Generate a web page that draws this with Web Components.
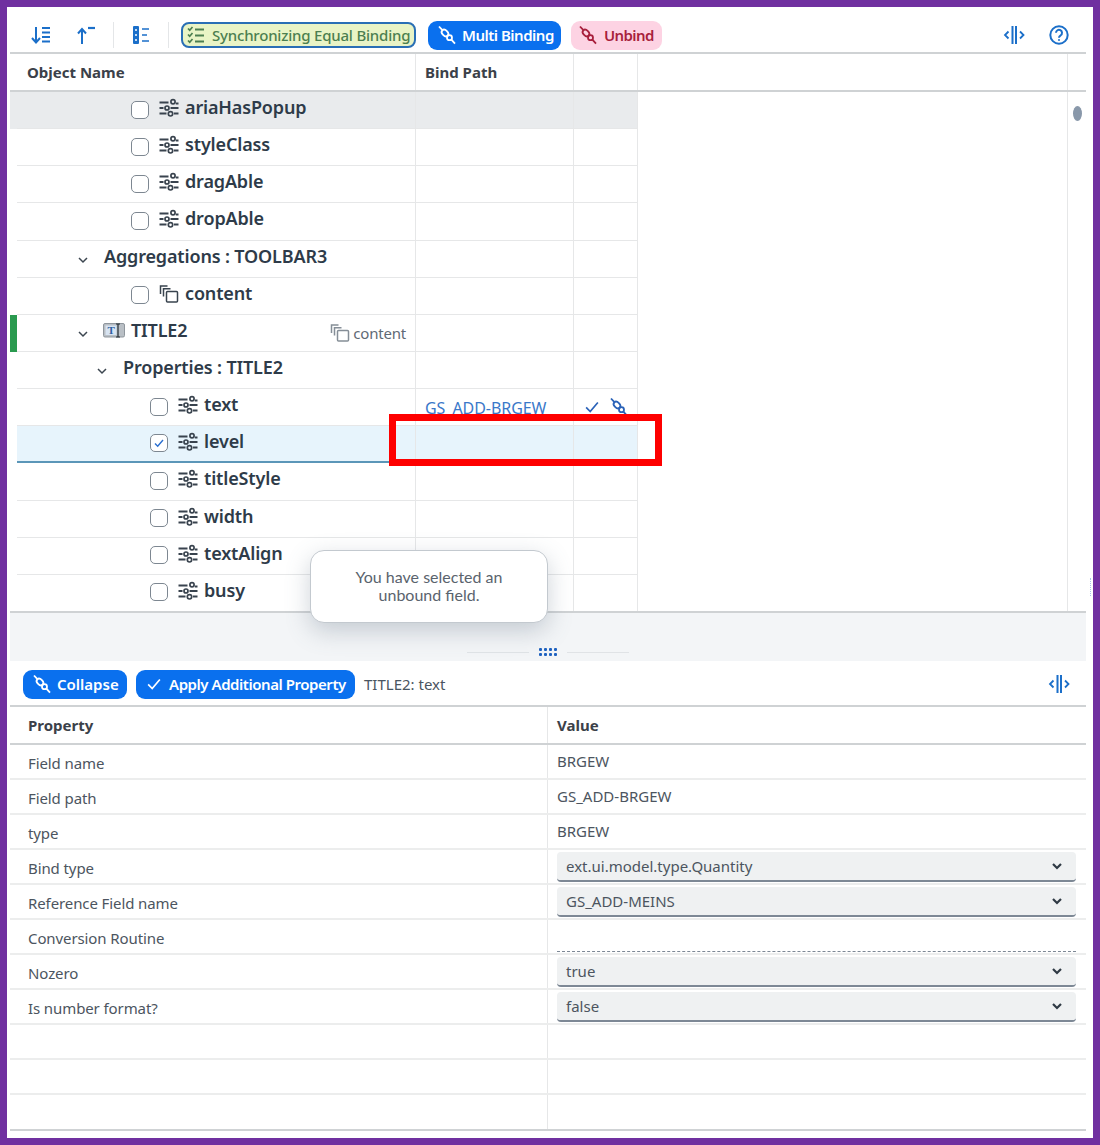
<!DOCTYPE html>
<html>
<head>
<meta charset="utf-8">
<title>Binding</title>
<style>
  html, body { margin: 0; padding: 0; background: #7030a0; }
  body { font-family: "Noto Sans", "Open Sans", sans-serif; }
</style>
</head>
<body>
<app-shell>
  <tool-bar slot="top">
    <ui-icon name="sortdown" class="tb"></ui-icon>
    <ui-icon name="sortup" class="tb"></ui-icon>
    <tb-sep></tb-sep>
    <ui-icon name="list" class="tb"></ui-icon>
    <tb-sep></tb-sep>
    <ui-button kind="sync" icon="checklist" width="235" lead="3">Synchronizing Equal Binding</ui-button>
    <ui-button kind="primary" icon="bind" width="133" lead="3" style="letter-spacing:-.5px">Multi Binding</ui-button>
    <ui-button kind="danger" icon="bind" width="91" lead="1">Unbind</ui-button>
    <tb-spring></tb-spring>
    <ui-icon name="split" class="tb"></ui-icon>
    <ui-icon name="help" class="tb"></ui-icon>
  </tool-bar>

  <tree-table slot="tree">
    <tree-row indent="114" icon="prop" check hot>ariaHasPopup</tree-row>
    <tree-row indent="114" icon="prop" check>styleClass</tree-row>
    <tree-row indent="114" icon="prop" check>dragAble</tree-row>
    <tree-row indent="114" icon="prop" check>dropAble</tree-row>
    <tree-row indent="60" chevron>Aggregations : TOOLBAR3</tree-row>
    <tree-row indent="114" icon="agg" check>content</tree-row>
    <tree-row indent="60" chevron icon="title" marked>TITLE2<span slot="note">content</span></tree-row>
    <tree-row indent="79" chevron>Properties : TITLE2</tree-row>
    <tree-row indent="133" icon="prop" check>text<span slot="bind">GS_ADD-BRGEW</span><span slot="act">bound</span></tree-row>
    <tree-row indent="133" icon="prop" check checked selected>level</tree-row>
    <tree-row indent="133" icon="prop" check>titleStyle</tree-row>
    <tree-row indent="133" icon="prop" check>width</tree-row>
    <tree-row indent="133" icon="prop" check>textAlign</tree-row>
    <tree-row indent="133" icon="prop" check>busy</tree-row>
  </tree-table>

  <split-bar slot="split"></split-bar>

  <tool-bar slot="lower" low>
    <ui-button kind="primary" icon="bind" width="104" style="letter-spacing:0">Collapse</ui-button>
    <ui-button kind="primary" icon="check" width="219" style="letter-spacing:-.45px;gap:6px">Apply Additional Property</ui-button>
    <span class="crumb">TITLE2: text</span>
    <tb-spring></tb-spring>
    <ui-icon name="split" class="tb"></ui-icon>
  </tool-bar>

  <detail-table slot="detail">
    <detail-row label="Field name" value="BRGEW"></detail-row>
    <detail-row label="Field path" value="GS_ADD-BRGEW"></detail-row>
    <detail-row label="type" value="BRGEW"></detail-row>
    <detail-row label="Bind type" select="ext.ui.model.type.Quantity"></detail-row>
    <detail-row label="Reference Field name" select="GS_ADD-MEINS"></detail-row>
    <detail-row label="Conversion Routine" dashed></detail-row>
    <detail-row label="Nozero" select="true"></detail-row>
    <detail-row label="Is number format?" select="false"></detail-row>
    <detail-row></detail-row>
    <detail-row></detail-row>
    <detail-row last></detail-row>
  </detail-table>

  <focus-mark slot="over"></focus-mark>
  <hint-box slot="over">You have selected an unbound field.</hint-box>
</app-shell>

<script>
const ICONS = {
  sortdown: `<svg viewBox="0 0 24 24" width="24" height="24" fill="none" stroke="currentColor" stroke-width="2"><path d="M7 4v15M3 15l4 4.500 4-4.500"/><path d="M13 5h8M13 9.500h8M13 14h8M13 18.500h8" stroke-width="2.200"/></svg>`,
  sortup: `<svg viewBox="0 0 24 24" width="24" height="24" fill="none" stroke="currentColor" stroke-width="2"><path d="M8 21V6M4 10.500L8 6l4 4.500"/><path d="M14 5h7" stroke-width="2.200"/></svg>`,
  list: `<svg viewBox="0 0 24 24" width="24" height="24" fill="none" stroke="currentColor"><rect x="4" y="3" width="6" height="18" rx="1" fill="currentColor" stroke="none"/><path d="M6 7h2M6 12h2M6 17h2" stroke="#fff" stroke-width="1.500"/><path d="M13 6h7M13 12h5M13 18h7" stroke-width="1.600"/></svg>`,
  split: `<svg viewBox="0 0 24 24" width="24" height="24" fill="none" stroke="currentColor"><path d="M10.500 3v18M14 3v18" stroke-width="2"/><path d="M6.500 8.500L3 12l3.500 3.500M18 8.500l3.500 3.500-3.500 3.500" stroke-width="1.800"/></svg>`,
  help: `<svg viewBox="0 0 24 24" width="24" height="24" fill="none" stroke="currentColor" stroke-width="2"><circle cx="12" cy="12" r="8.700"/><path d="M9 9.800a3 3 0 1 1 4.700 2.500c-1.100.7-1.700 1.200-1.700 2.400"/><circle cx="12" cy="17" r="1" fill="currentColor" stroke="none"/></svg>`,
  checklist: `<svg viewBox="0 0 20 20" width="20" height="20" fill="none" stroke="currentColor" stroke-width="1.700"><path d="M2 3.500l1.700 1.700L6.500 2M2 9.500l1.700 1.700 2.800-3.200M2 15.500l1.700 1.700 2.800-3.200"/><path d="M9 4.500h9M9 10.500h9M9 16.500h9" stroke-width="2"/></svg>`,
  bind: `<svg viewBox="0 0 20 20" width="20" height="20" fill="none" stroke="currentColor" stroke-width="1.800"><path d="M2 1.500l3.400 3.700M14.400 14.600l3.600 4"/><ellipse cx="8" cy="8" rx="3.800" ry="2.700" transform="rotate(45 8 8)"/><circle cx="12.500" cy="12.700" r="2.500"/></svg>`,
  check: `<svg viewBox="0 0 20 20" width="18" height="18" fill="none" stroke="currentColor" stroke-width="1.900"><path d="M3.500 10.500l4.500 4.500 8.500-10"/></svg>`,
  prop: `<svg viewBox="0 0 20 20" width="20" height="20" fill="none" stroke="currentColor" stroke-width="2"><path d="M0.500 4.500h9M0.500 10h4M11.500 10h8M0.500 15.500h7M15 15.500h4.500M16.800 5.500h2.700" /><circle cx="14" cy="3.800" r="2.100" stroke-width="1.700"/><circle cx="8" cy="10" r="2" stroke-width="1.700"/><circle cx="11.500" cy="15.800" r="2.200" stroke-width="1.700"/></svg>`,
  agg: `<svg viewBox="0 0 20 20" width="20" height="20" fill="none" stroke="currentColor" stroke-width="1.500"><path d="M1.500 10V2h7"/><path d="M4.500 12.500V4.800h7"/><rect x="7.500" y="7.500" width="11" height="10.500" rx="1"/></svg>`,
  title: `<svg viewBox="0 0 22 15" width="22" height="15"><rect x="0.500" y="0.500" width="21" height="13.500" rx="1.500" fill="#b9bfc5" stroke="#8f969d"/><rect x="2.500" y="2.500" width="11" height="9.500" fill="#d8e4f2"/><text x="8" y="11" text-anchor="middle" font-family="Liberation Serif, serif" font-size="11" font-weight="700" fill="#2f5f9f">T</text><path d="M13 1h4M13 14h4M15 1v13" stroke="#222b33" stroke-width="1.200" fill="none"/></svg>`,
  chevron: `<svg viewBox="0 0 12 12" width="12" height="12" fill="none" stroke="currentColor" stroke-width="1.500"><path d="M2 4l4 4 4-4"/></svg>`
};

class UiIcon extends HTMLElement {
  connectedCallback() {
    const root = this.shadowRoot || this.attachShadow({ mode: 'open' });
    root.innerHTML = `
      <style>
        :host { display: inline-flex; align-items: center; justify-content: center; flex: none; }
        :host(.tb) { width: 36px; height: 35px; color: #1b6fc9; }
        svg { display: block; }
      </style>${ICONS[this.getAttribute('name')]}`;
  }
}
customElements.define('ui-icon', UiIcon);

class TbSep extends HTMLElement {
  constructor() {
    super();
    this.attachShadow({ mode: 'open' }).innerHTML = `
      <style>:host { display: block; width: 1px; height: 26px; background: #e4e6e8; flex: none; }</style>`;
  }
}
customElements.define('tb-sep', TbSep);

class TbSpring extends HTMLElement {
  constructor() {
    super();
    this.attachShadow({ mode: 'open' }).innerHTML = `<style>:host { display: block; flex: 1; }</style>`;
  }
}
customElements.define('tb-spring', TbSpring);

class ToolBar extends HTMLElement {
  constructor() {
    super();
    this.attachShadow({ mode: 'open' }).innerHTML = `
      <style>
        :host {
          display: flex; align-items: center; gap: 9px; box-sizing: border-box;
          height: 36px; padding: 0 9px 0 13px; border-bottom: 2px solid #cfd2d4; background: #fff;
        }
        :host([low]) { height: 46px; padding-top: 2px; }
        ::slotted(.crumb) { font-size: 15px; color: #4a5561; }
      </style>
      <slot></slot>`;
  }
}
customElements.define('tool-bar', ToolBar);

class UiButton extends HTMLElement {
  connectedCallback() {
    if (this.shadowRoot) return;
    const root = this.attachShadow({ mode: 'open' });
    root.innerHTML = `
      <style>
        :host {
          display: inline-flex; align-items: center; box-sizing: border-box; flex: none; height: 29px;
          padding-left: 9px; gap: 5px; border-radius: 9px; font-size: 15px; white-space: nowrap;
        }
        :host([kind=primary]) { background: #0a70ee; color: #fff; font-weight: 600; letter-spacing: -0.4px; }
        :host([kind=danger]) { background: #fdd3e3; color: #a81f3c; font-weight: 600; padding-left: 7px; gap: 6px; letter-spacing: -0.6px; }
        :host([kind=sync]) {
          height: 26px; background: #e9f4c6; color: #4c7f50; border: 2px solid #2a6fb5;
          border-radius: 8px; padding-left: 3px; gap: 6px; font-weight: 500; letter-spacing: -0.2px;
        }
      </style>
      <ui-icon name="${this.getAttribute('icon')}"></ui-icon><slot></slot>`;
    this.style.width = this.getAttribute('width') + 'px';
    this.style.marginLeft = (this.getAttribute('lead') || 0) + 'px';
  }
}
customElements.define('ui-button', UiButton);

class TreeTable extends HTMLElement {
  constructor() {
    super();
    this.attachShadow({ mode: 'open' }).innerHTML = `
      <style>
        :host { display: block; height: 559px; background: #fff; color: #32404e; }
        .head {
          display: grid; grid-template-columns: 406px 158px 64px 430px 18px; height: 38px;
          box-sizing: border-box; border-bottom: 2px solid #cfd2d4; align-items: stretch;
          font-size: 15px; font-weight: 700; color: #3b4149;
        }
        .head div { border-right: 1px solid #e6e7e8; display: flex; align-items: center; padding-left: 9px; box-sizing: border-box; }
        .head div:first-child { padding-left: 17px; }
        .head div:last-child { border-right: 0; }
        .body { display: grid; grid-template-columns: 628px 430px 18px; height: 521px; border-bottom: 2px solid #cfd2d4; box-sizing: border-box; }
        .rows { display: flex; flex-direction: column; overflow: hidden; }
        .gap { border-right: 1px solid #e6e7e8; }
        .scroll { padding-top: 14px; display: flex; justify-content: center; }
        .thumb { width: 9px; height: 15px; border-radius: 50%; background: #8998aa; }
      </style>
      <div class="head"><div>Object Name</div><div>Bind Path</div><div></div><div></div><div></div></div>
      <div class="body">
        <div class="rows"><slot></slot></div>
        <div class="gap"></div>
        <div class="scroll"><div class="thumb"></div></div>
      </div>`;
  }
}
customElements.define('tree-table', TreeTable);

class TreeRow extends HTMLElement {
  connectedCallback() {
    if (this.shadowRoot) return;
    const has = a => this.hasAttribute(a);
    const icon = this.getAttribute('icon');
    const chevron = has('chevron');
    this.attachShadow({ mode: 'open' }).innerHTML = `
      <style>
        :host {
          display: grid; grid-template-columns: 7px 399px 158px 64px; height: 37.15px; flex: none;
          color: #2e3b49; font-size: 18px; font-weight: 600; letter-spacing: -0.15px;
        }
        .mark { background: transparent; }
        :host([marked]) .mark { background: #2a9a4f; }
        :host([hot]) .mark { background: #e9ebed; }
        .cell { box-sizing: border-box; border-right: 1px solid #e6e7e8; border-bottom: 1px solid #e6e7e8; min-width: 0; }
        :host([hot]) .cell { background: #e9ebed; }
        :host([selected]) .cell { background: #e7f4fc; border-bottom: 2px solid #5b96b8; }
        .name { display: flex; align-items: center; gap: 10px; padding-bottom: 6px; white-space: nowrap; }
        .box {
          width: 18px; height: 18px; box-sizing: border-box; border: 1.500px solid #7d8791; border-radius: 5px;
          background: #fff; flex: none; margin-top: 5px; display: flex; align-items: center; justify-content: center; color: #2a6fd0;
        }
        .box svg { display: block; }
        .chev { color: #3c4650; width: 12px; margin-top: 8px; display: flex; margin-right: 8px; }
        .ico { display: flex; color: #39434e; margin-top: 2px; }
        .label { margin-left: -4px; }
        .chev + .label { margin-left: -3px; }
        .title .chev { margin-right: 5px; }
        .title .ico { margin-left: -1px; }
        .title .label { margin-left: -4px; }
        .note {
          margin-left: auto; padding-right: 9px; margin-top: 6px; display: flex; align-items: center; gap: 3px;
          font-size: 15px; font-weight: 400; color: #5f6a75; letter-spacing: -0.2px;
        }
        .note ui-icon { color: #858e97; }
        .bind {
          display: flex; align-items: center; padding: 2px 0 0 9px; font-size: 16px; font-weight: 400;
          color: #3a78c9; letter-spacing: -0.05px; white-space: nowrap;
        }
        .act { display: flex; align-items: center; gap: 8px; padding-left: 9px; color: #2a62b8; }
        .hidden { display: none; }
      </style>
      <div class="mark"></div>
      <div class="cell name ${icon === 'title' ? 'title' : ''}" style="padding-left:${this.getAttribute('indent')}px">
        ${has('check') ? `<div class="box">${has('checked') ? '<svg viewBox="0 0 12 12" width="12" height="12" fill="none" stroke="currentColor" stroke-width="1.400"><path d="M2 6.500l2.700 2.700L10 3"/></svg>' : ''}</div>` : ''}
        ${chevron ? `<div class="chev">${ICONS.chevron}</div>` : ''}
        ${icon ? `<div class="ico"><ui-icon name="${icon}"></ui-icon></div>` : ''}
        <span class="label"><slot></slot></span>
        <span class="note" id="note"><ui-icon name="agg"></ui-icon><slot name="note"></slot></span>
      </div>
      <div class="cell bind"><slot name="bind"></slot></div>
      <div class="cell act" id="act"></div>`;
    const s = this.shadowRoot;
    if (!this.querySelector('[slot=note]')) s.getElementById('note').classList.add('hidden');
    const act = this.querySelector('[slot=act]');
    if (act) {
      act.remove();
      s.getElementById('act').innerHTML = `<ui-icon name="check"></ui-icon><ui-icon name="bind"></ui-icon>`;
    }
  }
}
customElements.define('tree-row', TreeRow);

class SplitBar extends HTMLElement {
  constructor() {
    super();
    this.attachShadow({ mode: 'open' }).innerHTML = `
      <style>
        :host { display: flex; align-items: flex-end; justify-content: center; gap: 10px; height: 48px; padding: 0 0 4px 0; box-sizing: border-box; background: #f3f5f7; }
        .line { width: 62px; height: 1px; background: #e0e3e6; margin-bottom: 4px; }
        svg { display: block; }
      </style>
      <div class="line"></div>
      <svg width="18" height="9" viewBox="0 0 18 9" fill="#1f62c0">
        <rect x="0" y="0" width="3" height="3" rx="1"/><rect x="5" y="0" width="3" height="3" rx="1"/><rect x="10" y="0" width="3" height="3" rx="1"/><rect x="15" y="0" width="3" height="3" rx="1"/>
        <rect x="0" y="5" width="3" height="3" rx="1"/><rect x="5" y="5" width="3" height="3" rx="1"/><rect x="10" y="5" width="3" height="3" rx="1"/><rect x="15" y="5" width="3" height="3" rx="1"/>
      </svg>
      <div class="line"></div>`;
  }
}
customElements.define('split-bar', SplitBar);

class DetailTable extends HTMLElement {
  constructor() {
    super();
    this.attachShadow({ mode: 'open' }).innerHTML = `
      <style>
        :host { display: block; background: #fff; }
        .head {
          display: grid; grid-template-columns: 537px 1fr; height: 38px; box-sizing: border-box;
          border-bottom: 2px solid #cfd2d4; font-size: 15px; font-weight: 700; color: #3b4149;
        }
        .head div { display: flex; align-items: center; padding-left: 18px; }
        .head div + div { border-left: 1px solid #e6e7e8; padding-left: 9px; }
      </style>
      <div class="head"><div>Property</div><div>Value</div></div>
      <slot></slot>`;
  }
}
customElements.define('detail-table', DetailTable);

class DetailRow extends HTMLElement {
  connectedCallback() {
    if (this.shadowRoot) return;
    const label = this.getAttribute('label') || '';
    const value = this.getAttribute('value') || '';
    const select = this.getAttribute('select');
    let right = `<span class="val">${value}</span>`;
    if (select !== null) right = `<div class="sel"><span>${select}</span>${ICONS.chevron}</div>`;
    if (this.hasAttribute('dashed')) right = `<div class="dash"></div>`;
    this.attachShadow({ mode: 'open' }).innerHTML = `
      <style>
        :host {
          display: grid; grid-template-columns: 537px 1fr; height: 35px; box-sizing: border-box;
          border-bottom: 2px solid #eceded; font-size: 15px; color: #4c5560;
        }
        :host([last]) { border-bottom-color: #cfd2d4; height: 36px; }
        .l { display: flex; align-items: center; padding: 3px 0 0 18px; letter-spacing: -0.1px; }
        .r { border-left: 1px solid #e6e7e8; display: flex; align-items: center; padding: 0 10px 0 9px; }
        .val { padding-bottom: 1px; }
        .sel {
          flex: 1; height: 30px; box-sizing: border-box; display: flex; align-items: center; justify-content: space-between;
          background: #eff1f2; border-bottom: 2px solid #7d8895; border-radius: 4px; padding: 0 13px 0 9px; margin-top: 1px;
        }
        .sel svg { color: #2f3a45; stroke-width: 2.200; }
        .dash { flex: 1; align-self: flex-end; border-bottom: 1px dashed #7d8895; margin-bottom: 1px; }
      </style>
      <div class="l">${label}</div>
      <div class="r">${right}</div>`;
  }
}
customElements.define('detail-row', DetailRow);

class FocusMark extends HTMLElement {
  constructor() {
    super();
    this.attachShadow({ mode: 'open' }).innerHTML = `
      <style>:host { position: absolute; left: 382px; top: 407px; width: 273px; height: 52px; box-sizing: border-box; border: 7px solid #fe0000; }</style>`;
  }
}
customElements.define('focus-mark', FocusMark);

class HintBox extends HTMLElement {
  constructor() {
    super();
    this.attachShadow({ mode: 'open' }).innerHTML = `
      <style>
        :host {
          position: absolute; left: 303px; top: 543px; width: 238px; height: 73px; box-sizing: border-box;
          display: flex; align-items: center; justify-content: center; text-align: center; padding: 0 30px 2px;
          background: #fff; border: 1px solid #c3c9cf; border-radius: 14px; box-shadow: 0 8px 24px rgba(90, 105, 125, .3);
          font-family: Lato, "Noto Sans", sans-serif; font-size: 16px; line-height: 18px; color: #5a636d;
        }
      </style>
      <slot></slot>`;
  }
}
customElements.define('hint-box', HintBox);

class AppShell extends HTMLElement {
  constructor() {
    super();
    this.attachShadow({ mode: 'open' }).innerHTML = `
      <style>
        :host {
          display: block; position: relative; box-sizing: border-box; width: 1086px; height: 1131px; margin: 7px;
          padding: 11px 7px 0 3px; background: #fff; overflow: hidden;
        }
        .dots { position: absolute; left: 1083px; top: 571px; width: 0; height: 18px; border-left: 1px dotted #a9c6e8; }
      </style>
      <slot name="top"></slot>
      <slot name="tree"></slot>
      <slot name="split"></slot>
      <slot name="lower"></slot>
      <slot name="detail"></slot>
      <slot name="over"></slot>
      <div class="dots"></div>`;
  }
}
customElements.define('app-shell', AppShell);
</script>
</body>
</html>
